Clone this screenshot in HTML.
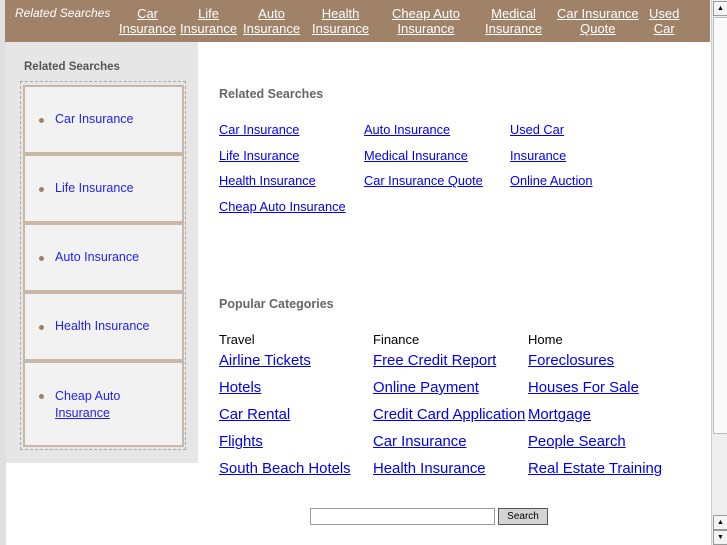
<!DOCTYPE html>
<html><head><style>
body{margin:0;width:727px;height:545px;overflow:hidden;background:#fff;font-family:"Liberation Sans",sans-serif;position:relative}
.a{position:absolute}
a{color:#00e;text-decoration:underline}
#hdr{left:5px;top:0;width:705px;height:42px;background:#a08269}
#hdr a{color:#fff;font-size:13px;position:absolute;text-align:center;line-height:15px;top:6px}
#side{left:6px;top:42px;width:192px;height:421px;background:#e6e6e6}
.box{position:absolute;left:23px;width:157px;height:65px;background:#f2f2f2;border:2px solid #c9b8a8}
.box span{position:absolute;left:14px;width:5px;height:5px;border-radius:50%;background:#a08269}
.box a{position:absolute;left:30px;font-size:12.5px;text-decoration:none;color:#22e}
.lk{font-size:12.8px;position:absolute}
.big{font-size:14.9px;position:absolute}
.cat{font-size:13px;position:absolute;color:#000}
h4{margin:0;position:absolute;font-size:12.5px;color:#666}
#sb{left:711px;top:0;width:16px;height:545px;background:#eee;border-left:1px solid #ccc}
</style></head><body>
<div class="a" style="left:0;top:0;width:6px;height:545px;background:#e0e0e0"></div>
<div id="hdr" class="a">
<i style="position:absolute;left:10px;top:6px;color:#fff;font-size:12px">Related Searches</i>
<a style="left:114px">Car<br>Insurance</a>
<a style="left:175px">Life<br>Insurance</a>
<a style="left:238px">Auto<br>Insurance</a>
<a style="left:307px">Health<br>Insurance</a>
<a style="left:387px">Cheap Auto<br>Insurance</a>
<a style="left:480px">Medical<br>Insurance</a>
<a style="left:552px">Car Insurance<br>Quote</a>
<a style="left:644px">Used<br>Car</a>
</div>
<div id="side" class="a"></div>
<h4 style="left:24px;top:61px;color:#555;font-size:11.5px">Related Searches</h4>
<div class="a" style="left:20px;top:81px;width:164px;height:367px;border:1px dashed #aaa"></div>
<div class="box" style="top:85px"><span style="top:31px"></span><a style="top:25px">Car Insurance</a></div>
<div class="box" style="top:154px"><span style="top:31px"></span><a style="top:25px">Life Insurance</a></div>
<div class="box" style="top:223px"><span style="top:31px"></span><a style="top:25px">Auto Insurance</a></div>
<div class="box" style="top:292px"><span style="top:31px"></span><a style="top:25px">Health Insurance</a></div>
<div class="box" style="top:361px;height:82px"><span style="top:31px"></span><a style="top:25px;line-height:17px">Cheap Auto<br><u>Insurance</u></a></div>

<h4 style="left:219px;top:87px">Related Searches</h4>
<a class="lk" style="left:219px;top:122px">Car Insurance</a>
<a class="lk" style="left:364px;top:122px">Auto Insurance</a>
<a class="lk" style="left:510px;top:122px">Used Car</a>
<a class="lk" style="left:219px;top:148px">Life Insurance</a>
<a class="lk" style="left:364px;top:148px">Medical Insurance</a>
<a class="lk" style="left:510px;top:148px">Insurance</a>
<a class="lk" style="left:219px;top:173px">Health Insurance</a>
<a class="lk" style="left:364px;top:173px">Car Insurance Quote</a>
<a class="lk" style="left:510px;top:173px">Online Auction</a>
<a class="lk" style="left:219px;top:199px">Cheap Auto Insurance</a>

<h4 style="left:219px;top:297px">Popular Categories</h4>
<div class="cat" style="left:219px;top:332px">Travel</div>
<div class="cat" style="left:373px;top:332px">Finance</div>
<div class="cat" style="left:528px;top:332px">Home</div>
<a class="big" style="left:219px;top:353px">Airline Tickets</a>
<a class="big" style="left:373px;top:353px">Free Credit Report</a>
<a class="big" style="left:528px;top:353px">Foreclosures</a>
<a class="big" style="left:219px;top:380px">Hotels</a>
<a class="big" style="left:373px;top:380px">Online Payment</a>
<a class="big" style="left:528px;top:380px">Houses For Sale</a>
<a class="big" style="left:219px;top:407px">Car Rental</a>
<a class="big" style="left:373px;top:407px">Credit Card Application</a>
<a class="big" style="left:528px;top:407px">Mortgage</a>
<a class="big" style="left:219px;top:434px">Flights</a>
<a class="big" style="left:373px;top:434px">Car Insurance</a>
<a class="big" style="left:528px;top:434px">People Search</a>
<a class="big" style="left:219px;top:461px">South Beach Hotels</a>
<a class="big" style="left:373px;top:461px">Health Insurance</a>
<a class="big" style="left:528px;top:461px">Real Estate Training</a>

<div class="a" style="left:310px;top:508px;width:183px;height:15px;border:1px solid #999"></div>
<div class="a" style="left:498px;top:508px;width:48px;height:15px;border:1px solid #555;background:#d4d4d4;font-size:10px;text-align:center;line-height:15px">Search</div>

<div id="sb" class="a">
<div class="a" style="left:1px;top:1px;width:13px;height:13px;background:#f4f4f4;border:1px solid #999;font-size:7px;text-align:center;line-height:13px">▲</div>
<div class="a" style="left:1px;top:17px;width:13px;height:415px;background:#fafafa;border:1px solid #bbb"></div>
<div class="a" style="left:1px;top:515px;width:13px;height:13px;background:#f4f4f4;border:1px solid #999;font-size:7px;text-align:center;line-height:13px">▲</div>
<div class="a" style="left:1px;top:530px;width:13px;height:13px;background:#f4f4f4;border:1px solid #999;font-size:7px;text-align:center;line-height:13px">▼</div>
</div>
</body></html>
